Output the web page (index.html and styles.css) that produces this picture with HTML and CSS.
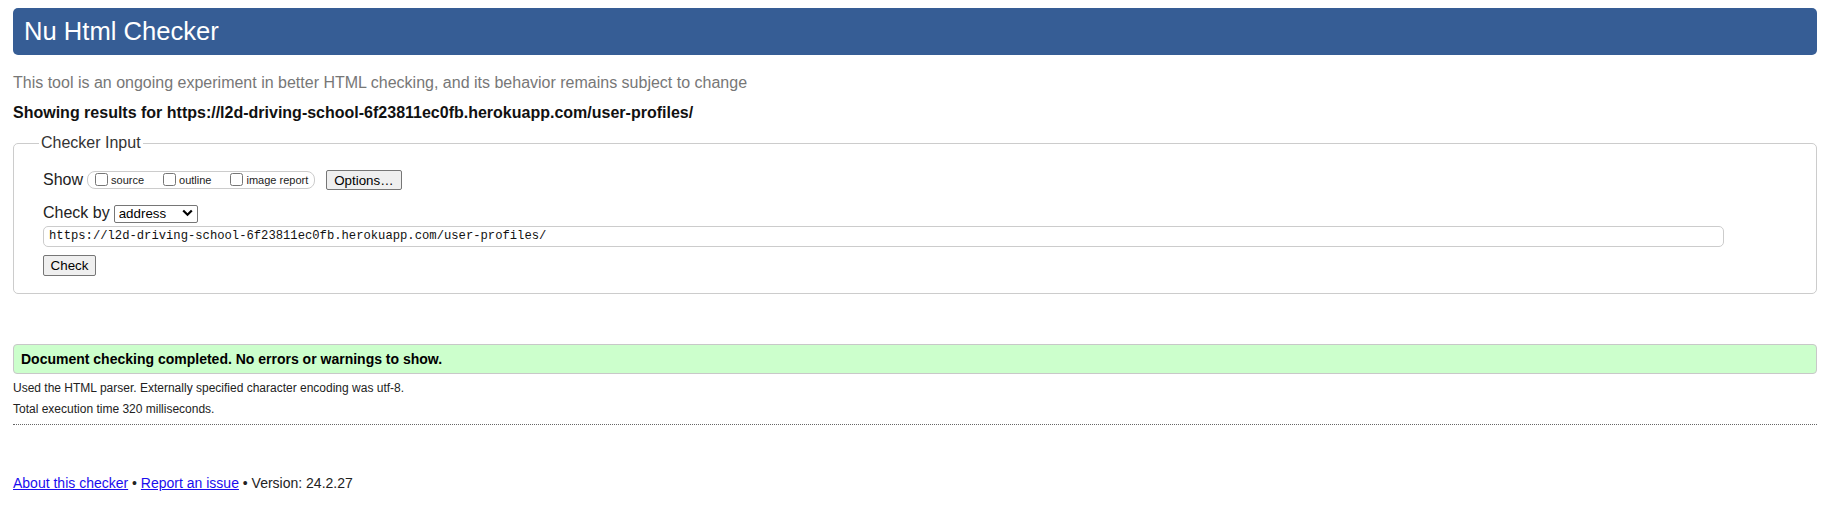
FILE: index.html
```html
<!DOCTYPE html>
<html lang="en">
<head>
<meta charset="utf-8">
<title>Showing results for https://l2d-driving-school-6f23811ec0fb.herokuapp.com/user-profiles/ - Nu Html Checker</title>
<link rel="stylesheet" href="styles.css">
</head>
<body>
  <h1 class="title">Nu Html Checker</h1>
  <p class="subtitle">This tool is an ongoing experiment in better HTML checking, and its behavior remains subject to change</p>
  <p class="showing">Showing results for https://l2d-driving-school-6f23811ec0fb.herokuapp.com/user-profiles/</p>

  <form class="checker">
    <fieldset class="checker-input">
      <legend class="checker-legend">Checker Input</legend>
      <div class="show-row">
        <span class="row-label">Show</span>
        <span class="show-opts">
          <label class="opt"><input type="checkbox" class="cb">source</label>
          <label class="opt"><input type="checkbox" class="cb">outline</label>
          <label class="opt"><input type="checkbox" class="cb">image report</label>
        </span>
        <button type="button" class="btn btn-options">Options…</button>
      </div>
      <div class="checkby-row">
        <label class="row-label">Check by</label>
        <span class="select-wrap">
          <select class="select"><option>address</option><option>file upload</option><option>text input</option></select>
          <svg class="chev" width="11" height="8" viewBox="0 0 11 8" aria-hidden="true"><path d="M1.2 1.5 L5.5 5.8 L9.8 1.5" fill="none" stroke="#000" stroke-width="2.2"/></svg>
        </span>
      </div>
      <input class="url" type="url" value="https://l2d-driving-school-6f23811ec0fb.herokuapp.com/user-profiles/">
      <div class="submit-row"><button type="button" class="btn btn-check">Check</button></div>
    </fieldset>
  </form>

  <p class="success">Document checking completed. No errors or warnings to show.</p>
  <div class="details">
    <p class="detail">Used the HTML parser. Externally specified character encoding was utf-8.</p>
    <p class="detail">Total execution time 320 milliseconds.</p>
  </div>

  <p class="footer"><a href="#" class="link">About this checker</a> • <a href="#" class="link">Report an issue</a> • Version: 24.2.27</p>
</body>
</html>
```

FILE: styles.css
```css
* { box-sizing: border-box; }

html, body {
  background: #fff;
}

body {
  margin: 0;
  padding: 0 13px;
  font-family: "Liberation Sans", Arial, sans-serif;
  color: #222;
}

.title {
  margin: 8px 0 0;
  height: 47px;
  line-height: 47px;
  padding: 0 11px;
  background: #365d95;
  color: #fff;
  font-size: 25.6px;
  font-weight: normal;
  border-radius: 5px;
}

.subtitle {
  margin: 19px 0 0;
  font-size: 16px;
  line-height: 18px;
  color: #777;
}

.showing {
  margin: 12px 0 0;
  font-size: 16px;
  line-height: 18px;
  font-weight: bold;
  color: #111;
}

.checker {
  margin: 12px 0 0;
}

.checker-input {
  margin: 0;
  border: 1px solid #cccccc;
  border-radius: 5px;
  padding: 18px 29px 17px;
  min-width: 0;
}

.checker-legend {
  font-size: 16px;
  line-height: 18px;
  padding: 0 2px;
  margin-left: -4px;
  color: #333;
}

.show-row {
  display: flex;
  align-items: center;
  height: 20px;
}

.row-label {
  font-size: 16px;
  line-height: 18px;
  color: #222;
}

.show-opts {
  display: inline-flex;
  align-items: center;
  gap: 19px;
  height: 18px;
  margin-left: 4px;
  padding: 0 6px 0 7px;
  border: 1px solid #cccccc;
  border-radius: 8px;
}

.opt {
  display: inline-flex;
  align-items: center;
  font-size: 11px;
  line-height: 13px;
  color: #222;
}

.cb {
  width: 13px;
  height: 13px;
  margin: 0 3px 0 0;
  position: relative;
  top: -1px;
}

.btn {
  font-family: "Liberation Sans", Arial, sans-serif;
  font-size: 13.33px;
  color: #000;
  background: #efefef;
  border: 1px solid #767676;
  border-radius: 2px;
  padding: 0 7px;
}

.btn-options {
  height: 20px;
  margin-left: 11px;
}

.checkby-row {
  display: flex;
  align-items: baseline;
  gap: 4px;
  margin-top: 14px;
}

.select-wrap {
  position: relative;
  display: inline-block;
}

.select {
  appearance: none;
  -webkit-appearance: none;
  width: 84px;
  height: 18px;
  padding: 0 0 0 4px;
  font-family: "Liberation Sans", Arial, sans-serif;
  font-size: 13.33px;
  color: #000;
  background: #fff;
  border: 1px solid #767676;
  border-radius: 2px;
}

.chev {
  position: absolute;
  right: 5px;
  top: 5px;
  pointer-events: none;
}

.url {
  display: block;
  width: 1681px;
  height: 21px;
  margin-top: 3px;
  padding: 0 5px;
  font-family: "Liberation Mono", "DejaVu Sans Mono", monospace;
  font-size: 12.2px;
  color: #111;
  background: #fff;
  border: 1px solid #cccccc;
  border-radius: 5px;
}

.submit-row {
  margin-top: 8px;
  display: flex;
}

.btn-check {
  height: 21px;
  width: 53px;
  padding: 0;
}

.success {
  margin: 50px 0 0;
  padding: 6px 7px;
  font-size: 14px;
  line-height: 16px;
  font-weight: bold;
  color: #000;
  background: #ccffcc;
  border: 1px solid #c8c8c8;
  border-radius: 4px;
}

.details {
  padding-bottom: 8px;
  border-bottom: 1px dotted #666;
}

.detail {
  margin: 7px 0 0;
  font-size: 12px;
  line-height: 14px;
  color: #222;
}

.footer {
  margin: 50px 0 0;
  font-size: 14px;
  line-height: 16px;
  color: #222;
}

.link {
  color: #1a0dee;
}
```
